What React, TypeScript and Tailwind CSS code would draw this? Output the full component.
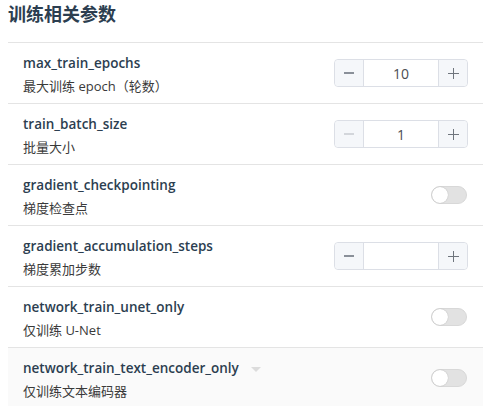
import React from "react";

type Param = {
  name: string;
  desc: string;
  kind: "number" | "switch";
  value?: string;
  minDisabled?: boolean;
  caret?: boolean;
  hover?: boolean;
};

const params: Param[] = [
  { name: "max_train_epochs", desc: "最大训练 epoch（轮数）", kind: "number", value: "10" },
  { name: "train_batch_size", desc: "批量大小", kind: "number", value: "1", minDisabled: true },
  { name: "gradient_checkpointing", desc: "梯度检查点", kind: "switch" },
  { name: "gradient_accumulation_steps", desc: "梯度累加步数", kind: "number", value: "" },
  { name: "network_train_unet_only", desc: "仅训练 U-Net", kind: "switch" },
  { name: "network_train_text_encoder_only", desc: "仅训练文本编码器", kind: "switch", caret: true, hover: true },
];

const NumberInput: React.FC<{ value: string; minDisabled?: boolean }> = ({ value, minDisabled }) => (
  <div className="flex h-[28px] w-[134px] rounded-[4px] border border-[#dcdfe6] bg-white">
    <div
      className={`flex w-[29px] items-center justify-center rounded-l-[4px] border-r border-[#dcdfe6] bg-[#f5f7fa] ${
        minDisabled ? "text-[#d3d6db]" : "text-[#8a9099]"
      }`}
    >
      <span className="block h-[1.5px] w-[10px] bg-current" />
    </div>
    <div className="flex flex-1 items-center justify-center text-[14px] text-[#4a4d52]">{value}</div>
    <div className="relative flex w-[29px] items-center justify-center rounded-r-[4px] border-l border-[#dcdfe6] bg-[#f5f7fa] text-[#6f757d]">
      <span className="block h-[1px] w-[11px] bg-current" />
      <span className="absolute block h-[11px] w-[1px] bg-current" />
    </div>
  </div>
);

const Switch: React.FC = () => (
  <div className="mr-[1px] flex h-[18px] w-[36px] items-center rounded-full border border-[#d8d8d8] bg-[#e2e2e2]">
    <span className="h-[16px] w-[16px] rounded-full bg-white shadow-[0_0_1px_rgba(0,0,0,0.3)]" />
  </div>
);

export default function App() {
  return (
    <div
      className="min-h-[406px] w-[487px] bg-white pl-[8px] pr-[4px]"
      style={{ fontFamily: '"Open Sans", "Noto Sans CJK SC", sans-serif' }}
    >
      <h2 className="pt-[1px] text-[18px] font-bold leading-[26px] text-[#2c3e50]">训练相关参数</h2>
      <div className="mt-[15px]">
        {params.map((p) => (
          <div
            key={p.name}
            className={`flex h-[61px] items-center justify-between border-t border-[#e4e4e4] px-[15px] ${
              p.hover ? "bg-[#fafafa]" : ""
            }`}
          >
            <div className="self-start pt-[9px]">
              <div className="flex items-center text-[13.5px] font-semibold leading-[22px] text-[#2c3e50]">
                {p.name}
                {p.caret && (
                  <span className="ml-[12px] mt-[2px] h-0 w-0 border-x-[5px] border-t-[5px] border-x-transparent border-t-[#dcdcdc]" />
                )}
              </div>
              <div className="text-[13px] leading-[24px] text-[#3a3a3a]">{p.desc}</div>
            </div>
            {p.kind === "number" ? <NumberInput value={p.value ?? ""} minDisabled={p.minDisabled} /> : <Switch />}
          </div>
        ))}
      </div>
    </div>
  );
}
